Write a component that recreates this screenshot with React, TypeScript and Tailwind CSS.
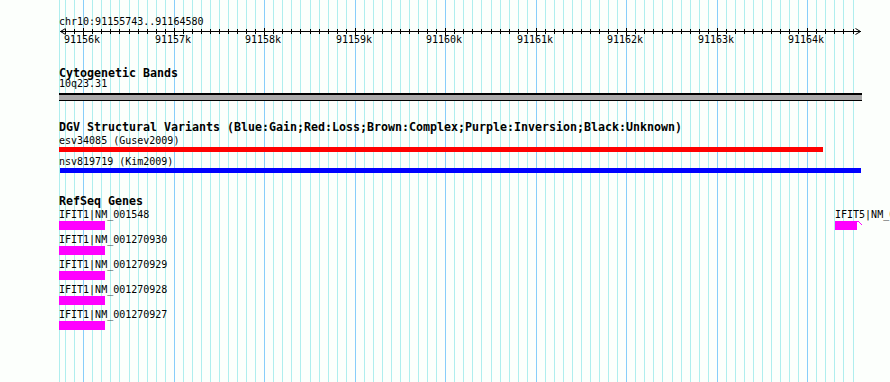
import React from "react";

const BP0 = 91155743;
const xOf = (bp: number) => Math.round(60 + (bp - BP0) * 0.0905);

const gridLines: { x: number; major: boolean }[] = [{ x: 59, major: false }];
for (let bp = 91155800; bp <= 91164500; bp += 100) {
  gridLines.push({ x: xOf(bp), major: bp % 1000 === 0 });
}
const majors = gridLines.filter((g) => g.major);
const labels = [
  "91156k",
  "91157k",
  "91158k",
  "91159k",
  "91160k",
  "91161k",
  "91162k",
  "91163k",
  "91164k",
];

const mono = "font-['DejaVu_Sans_Mono','Liberation_Mono',monospace]";

function Feature({
  x,
  w,
  label,
  hook,
}: {
  x: number;
  w: number;
  label: string;
  hook?: boolean;
}) {
  return (
    <div className="absolute top-0" style={{ left: x }}>
      <div className="h-[13px] whitespace-nowrap text-[10px] leading-[13px]">{label}</div>
      <div className="relative flex">
        <div className="h-[9px] bg-[#ff00ff]" style={{ width: w }} />
        {hook && (
          <svg width="5" height="6" className="block" shapeRendering="crispEdges">
            <path d="M0 0.5h1.5M1.5 1.5h1M2.5 2.5h1M3.5 3.5h1" stroke="#ff00ff" strokeWidth="1" />
          </svg>
        )}
      </div>
    </div>
  );
}

export default function App() {
  const genes = [
    "IFIT1|NM_001548",
    "IFIT1|NM_001270930",
    "IFIT1|NM_001270929",
    "IFIT1|NM_001270928",
    "IFIT1|NM_001270927",
  ];
  return (
    <div className={`relative w-[890px] h-[382px] overflow-hidden bg-[#fcfffc] text-black ${mono}`}>
      {/* grid */}
      <svg
        className="absolute inset-0"
        width="890"
        height="382"
        shapeRendering="crispEdges"
      >
        {gridLines.map((g, i) => (
          <line
            key={i}
            x1={g.x + 0.5}
            x2={g.x + 0.5}
            y1={0}
            y2={382}
            stroke={g.major ? "#87cefa" : "#afeeee"}
            strokeWidth="1"
          />
        ))}
      </svg>

      <div className="relative flex flex-col pt-[15px]">
        {/* ruler */}
        <div className="h-[11px] pl-[59px] text-[10px] leading-[13px] whitespace-nowrap">
          chr10:91155743..91164580
        </div>
        <div className="relative h-[20px]">
          <svg className="absolute left-0 top-0" width="890" height="20" shapeRendering="crispEdges">
            <line x1="60" x2="861" y1="5.5" y2="5.5" stroke="#000" />
            {gridLines.slice(1).map((g, i) =>
              g.major ? (
                <line key={i} x1={g.x + 0.5} x2={g.x + 0.5} y1="2" y2="10" stroke="#000" />
              ) : (
                <line key={i} x1={g.x + 0.5} x2={g.x + 0.5} y1="3" y2="8" stroke="#000" />
              )
            )}
            <path d="M60.5 5.5 L65.5 2.5 M60.5 5.5 L65.5 8.5" stroke="#000" fill="none" shapeRendering="auto" />
            <path d="M860.5 5.5 L855.5 2.5 M860.5 5.5 L855.5 8.5" stroke="#000" fill="none" shapeRendering="auto" />
          </svg>
          {majors.map((m, i) => (
            <div
              key={i}
              className="absolute top-[7px] w-[38px] text-center text-[10px] leading-[13px]"
              style={{ left: m.x - 20 }}
            >
              {labels[i]}
            </div>
          ))}
        </div>

        {/* Cytogenetic bands */}
        <div className="mt-[22px] h-[10px] pl-[59px] text-[11.63px] font-bold leading-[10px] whitespace-nowrap">
          Cytogenetic Bands
        </div>
        <div className="mt-[1px] h-[10px] pl-[59px] text-[10px] leading-[10px]">10q23.31</div>
        <svg className="mt-[4px] ml-[59px] block" width="803" height="8" shapeRendering="crispEdges">
          <rect x="0" y="0" width="803" height="8" fill="#a9a9a9" />
          <rect x="0" y="0" width="803" height="1.5" fill="#000" />
          <rect x="0" y="6.5" width="803" height="1.5" fill="#000" />
        </svg>

        {/* DGV */}
        <div className="mt-[20px] h-[13px] pl-[59px] text-[11.63px] font-bold leading-[13px] whitespace-nowrap">
          DGV Structural Variants (Blue:Gain;Red:Loss;Brown:Complex;Purple:Inversion;Black:Unknown)
        </div>
        <div className="h-[13px] pl-[59px] text-[10px] leading-[13px] whitespace-nowrap">
          esv34085 (Gusev2009)
        </div>
        <div className="ml-[59px] h-[5px] w-[764px] bg-[#ff0000]" />
        <div className="mt-[3px] h-[13px] pl-[59px] text-[10px] leading-[13px] whitespace-nowrap">
          nsv819719 (Kim2009)
        </div>
        <div className="ml-[60px] h-[5px] w-[801px] bg-[#0000ff]" />

        {/* RefSeq */}
        <div className="mt-[22px] h-[13px] pl-[59px] text-[11.63px] font-bold leading-[13px] whitespace-nowrap">
          RefSeq Genes
        </div>
        <div className="flex flex-col">
          {genes.map((g, i) => (
            <div key={i} className="relative h-[25px]">
              <Feature x={59} w={46} label={g} />
              {i === 0 && <Feature x={835} w={22} label="IFIT5|NM_012420" hook />}
            </div>
          ))}
        </div>
      </div>
    </div>
  );
}
